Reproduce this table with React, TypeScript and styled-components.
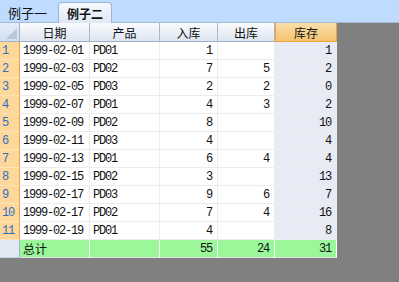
import React from "react"
import styled, { createGlobalStyle } from "styled-components"

const GlobalStyle = createGlobalStyle`
  html, body {
    margin: 0;
    padding: 0;
    background: #808080;
  }
  body {
    font-family: "Liberation Mono", "Noto Sans CJK SC", monospace;
  }
`

const Page = styled("div")`
  width: 399px;
  height: 282px;
  background: #808080;
  overflow: hidden;
`

const TabBar = styled("div")`
  height: 23px;
  box-sizing: border-box;
  background: #bfdbff;
  border-bottom: 1px solid #a3b9d6;
  display: flex;
  align-items: flex-end;
  padding-left: 8px;
  gap: 11px;
`

const Tab = styled("div")<{ $active?: boolean }>`
  height: ${(p) => (p.$active ? "21px" : "20px")};
  box-sizing: border-box;
  padding: 0 ${(p) => (p.$active ? "8px" : "0")};
  display: flex;
  align-items: center;
  font-family: "Noto Sans CJK SC", sans-serif;
  font-size: ${(p) => (p.$active ? "12px" : "13px")};
  font-weight: ${(p) => (p.$active ? 700 : 400)};
  color: #111;
  margin-bottom: ${(p) => (p.$active ? "-1px" : "0")};
  border-radius: 4px 4px 0 0;
  ${(p) =>
    p.$active &&
    `
    background: linear-gradient(#f6f9fd, #dfe8f5);
    border: 1px solid #9cb6da;
    border-bottom: none;
  `}
`

const Sheet = styled("div")`
  display: grid;
  width: 337px;
  grid-template-columns: 20px 70px 70px 58px 57px 62px;
  grid-template-rows: 19px repeat(12, 18px);
  background: #fff;
`

const Corner = styled("div")`
  position: relative;
  box-sizing: border-box;
  background: linear-gradient(#e4ecf7, #d4e0f0);
  border-right: 1px solid #9eb2cc;
  border-bottom: 1px solid #9eb2cc;
  &::after {
    content: "";
    position: absolute;
    right: 2px;
    bottom: 2px;
    border-style: solid;
    border-width: 0 0 11px 11px;
    border-color: transparent transparent #b8c7da transparent;
  }
`

const HeadCell = styled("div")<{ $selected?: boolean }>`
  box-sizing: border-box;
  display: flex;
  align-items: center;
  justify-content: center;
  font-family: "Noto Sans CJK SC", sans-serif;
  font-size: 12px;
  color: #111;
  background: ${(p) =>
    p.$selected
      ? "linear-gradient(#f9dfaa, #f5c46e)"
      : "linear-gradient(#fafbfd, #dde5f0)"};
  border-right: 1px solid ${(p) => (p.$selected ? "#f0a23c" : "#a9bad0")};
  border-bottom: 1px solid ${(p) => (p.$selected ? "#f0a23c" : "#9eb2cc")};
  ${(p) => p.$selected && "border-left: 1px solid #f0a23c;"}
`

const RowHead = styled("div")<{ $total?: boolean }>`
  box-sizing: border-box;
  display: flex;
  align-items: center;
  padding-left: 2px;
  font-size: 12px;
  letter-spacing: -1.2px;
  color: #2f6fbf;
  background: ${(p) => (p.$total ? "#e3e9f4" : "#fed89b")};
  border-right: 1px solid ${(p) => (p.$total ? "#9eb2cc" : "#f3a03a")};
  border-bottom: 1px solid ${(p) => (p.$total ? "#c6d2e2" : "#fbe3b8")};
`

const Cell = styled("div")<{ $num?: boolean; $stock?: boolean; $total?: boolean }>`
  box-sizing: border-box;
  display: flex;
  align-items: center;
  justify-content: ${(p) => (p.$num ? "flex-end" : "flex-start")};
  padding: 0 ${(p) => (p.$num ? "5px" : "3px")} 0 3px;
  font-size: 12px;
  letter-spacing: -1.2px;
  color: #111;
  white-space: nowrap;
  background: ${(p) => (p.$total ? "#9af89a" : p.$stock ? "#e8ebf5" : "#fff")};
  border-right: 1px solid ${(p) => (p.$total ? "#fff" : "#ececec")};
  border-bottom: 1px solid ${(p) => (p.$total ? "#e4e4e4" : "#ececec")};
`

const Label = styled("span")`
  font-family: "Noto Sans CJK SC", sans-serif;
  font-size: 12px;
  letter-spacing: 0;
`

type Row = { date: string; product: string; inQty: number; outQty?: number; stock: number }

const rows: Row[] = [
  { date: "1999-02-01", product: "PD01", inQty: 1, stock: 1 },
  { date: "1999-02-03", product: "PD02", inQty: 7, outQty: 5, stock: 2 },
  { date: "1999-02-05", product: "PD03", inQty: 2, outQty: 2, stock: 0 },
  { date: "1999-02-07", product: "PD01", inQty: 4, outQty: 3, stock: 2 },
  { date: "1999-02-09", product: "PD02", inQty: 8, stock: 10 },
  { date: "1999-02-11", product: "PD03", inQty: 4, stock: 4 },
  { date: "1999-02-13", product: "PD01", inQty: 6, outQty: 4, stock: 4 },
  { date: "1999-02-15", product: "PD02", inQty: 3, stock: 13 },
  { date: "1999-02-17", product: "PD03", inQty: 9, outQty: 6, stock: 7 },
  { date: "1999-02-17", product: "PD02", inQty: 7, outQty: 4, stock: 16 },
  { date: "1999-02-19", product: "PD01", inQty: 4, stock: 8 },
]

const totalIn = rows.reduce((a, r) => a + r.inQty, 0)
const totalOut = rows.reduce((a, r) => a + (r.outQty ?? 0), 0)

export default function App() {
  return (
    <Page>
      <GlobalStyle />
      <TabBar>
        <Tab>例子一</Tab>
        <Tab $active>例子二</Tab>
      </TabBar>
      <Sheet>
        <Corner />
        <HeadCell>日期</HeadCell>
        <HeadCell>产品</HeadCell>
        <HeadCell>入库</HeadCell>
        <HeadCell>出库</HeadCell>
        <HeadCell $selected>库存</HeadCell>
        {rows.map((r, i) => (
          <React.Fragment key={i}>
            <RowHead>{i + 1}</RowHead>
            <Cell>{r.date}</Cell>
            <Cell>{r.product}</Cell>
            <Cell $num>{r.inQty}</Cell>
            <Cell $num>{r.outQty ?? ""}</Cell>
            <Cell $num $stock>{r.stock}</Cell>
          </React.Fragment>
        ))}
        <RowHead $total />
        <Cell $total>
          <Label>总计</Label>
        </Cell>
        <Cell $total />
        <Cell $total $num>{totalIn}</Cell>
        <Cell $total $num>{totalOut}</Cell>
        <Cell $total $num>{totalIn - totalOut}</Cell>
      </Sheet>
    </Page>
  )
}
